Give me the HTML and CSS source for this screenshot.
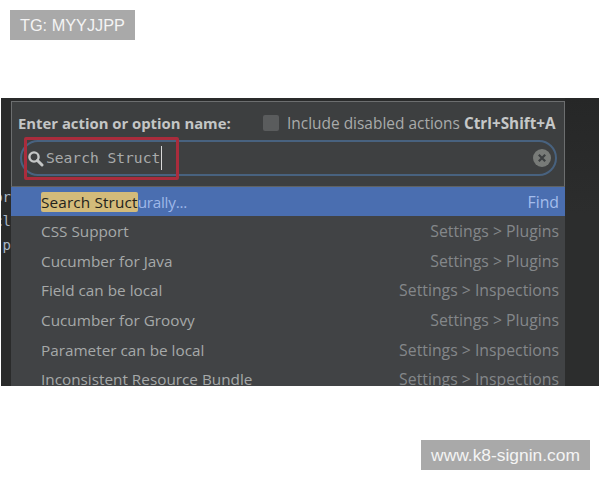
FILE: index.html
```html
<!DOCTYPE html>
<html lang="en">
<head>
<meta charset="utf-8">
<title>Enter action</title>
<link rel="stylesheet" href="styles.css">
</head>
<body>
<div class="tag tag-top">TG: MYYJJPP</div>
<main class="shot">
  <div class="gutter"><span>or</span><span>cl</span><span>p</span></div>
  <section class="dialog">
    <header class="head">
      <div class="title-row">
        <strong class="title">Enter action or option name:</strong>
        <span class="check"></span>
        <span class="include">Include disabled actions <b>Ctrl+Shift+A</b></span>
      </div>
      <div class="field">
        <svg class="lens" width="17" height="17" viewBox="0 0 17 17"><circle cx="7" cy="7" r="4.6" fill="none" stroke="#c4c6c6" stroke-width="2.4"/><path d="M10.5 10.5 15 15" stroke="#c4c6c6" stroke-width="3" stroke-linecap="round"/></svg>
        <span class="query">Search Struct</span><span class="caret"></span>
        <svg class="clear" width="18" height="18" viewBox="0 0 18 18"><circle cx="9" cy="9" r="9" fill="#787b78"/><path d="M5.8 5.8 12.2 12.2M12.2 5.8 5.8 12.2" stroke="#3c3f41" stroke-width="2.2"/></svg>
      </div>
      <div class="redbox"></div>
    </header>
    <ul class="list">
      <li class="row selected"><span class="name"><mark>Search Struct</mark><span class="rest">urally...</span></span><span class="where">Find</span></li>
      <li class="row"><span class="name">CSS Support</span><span class="where">Settings &gt; Plugins</span></li>
      <li class="row"><span class="name">Cucumber for Java</span><span class="where">Settings &gt; Plugins</span></li>
      <li class="row"><span class="name">Field can be local</span><span class="where">Settings &gt; Inspections</span></li>
      <li class="row"><span class="name">Cucumber for Groovy</span><span class="where">Settings &gt; Plugins</span></li>
      <li class="row"><span class="name">Parameter can be local</span><span class="where">Settings &gt; Inspections</span></li>
      <li class="row"><span class="name">Inconsistent Resource Bundle</span><span class="where">Settings &gt; Inspections</span></li>
    </ul>
  </section>
  <div class="side"></div>
</main>
<div class="tag tag-bottom">www.k8-signin.com</div>
</body>
</html>
```
FILE: styles.css
```css
* { box-sizing: border-box; }
html, body { margin: 0; padding: 0; }
body { width: 600px; height: 480px; background: #fff; overflow: hidden; font-family: "Open Sans", "Noto Sans", sans-serif; }

.tag { background: #a9a9a9; color: #f4f4f4; font-family: "Liberation Sans", Arial, sans-serif; display: flex; align-items: center; justify-content: center; height: 30px; }
.tag-top { width: 125px; margin: 10px 0 0 10px; font-size: 16.3px; }
.tag-bottom { width: 169px; margin: 54px 10px 0 auto; font-size: 17.4px; }

.shot { margin: 58px 1px 0 1px; height: 288px; background: #2a2b2b; display: flex; overflow: hidden; }
.gutter { width: 10px; flex: none; display: flex; flex-direction: column; align-items: flex-end; padding-top: 90px; gap: 5px; font: 14px/19px "DejaVu Sans Mono", monospace; color: #a9b7c6; overflow: hidden; white-space: nowrap; }
.gutter span { display: block; flex: none; }

.dialog { width: 554px; flex: none; margin-top: 3px; background: #414345; display: flex; flex-direction: column; }
.head { position: relative; flex: none; height: 86px; border: 1px solid #6c6e6f; border-bottom-color: #5f6264; padding: 8px 7px 0 6px; background: #3d3f40; }
.title-row { display: flex; align-items: center; height: 26px; color: #bcbfbf; white-space: nowrap; }
.title { font-weight: 700; font-size: 14.85px; color: #c4c6c6; width: 245px; flex: none; }
.check { width: 16px; height: 16px; border-radius: 2px; background: #5a5c5d; margin-right: 8px; flex: none; }
.include { color: #a9abab; font-size: 15.45px; }
.include b { color: #c6c8c8; font-weight: 700; font-size: 15.3px; }

.field { display: flex; align-items: center; height: 36px; width: 537px; margin: 4px 0 0 2px; padding: 0 4px 0 5px; border: 2px solid #48627f; border-radius: 18px; background: #3e4041; }
.lens { flex: none; margin-right: 2px; }
.query { font: 14.6px/20px "DejaVu Sans Mono", monospace; color: #a9abab; white-space: pre; }
.caret { width: 1px; height: 24px; background: #d8d8d8; margin-left: 1px; }
.clear { margin-left: auto; flex: none; }
.redbox { position: absolute; left: 12px; top: 35px; width: 155px; height: 43px; border: 3px solid #aa2c3c; border-radius: 2px; }

.list { list-style: none; margin: 0; padding: 0; flex: 1; min-height: 0; overflow: hidden; }
.row { display: flex; justify-content: space-between; align-items: center; height: 29.6px; padding: 0 6px 0 30px; color: #a6a9a9; white-space: nowrap; }
.row.selected { height: 29.4px; background: #4a6eb0; color: #9fb8e8; }
.name { font-size: 15.3px; }
.where { color: #84878a; font-size: 15.8px; }
.selected .where { color: #a4bdec; }
mark { background: #d3bb7a; color: #24231c; border-radius: 2px; letter-spacing: .15px; }
.rest { letter-spacing: -.25px; }
.side { flex: 1; background: linear-gradient(#262727, #2c2d2d 40%, #2c2d2d); }
```
